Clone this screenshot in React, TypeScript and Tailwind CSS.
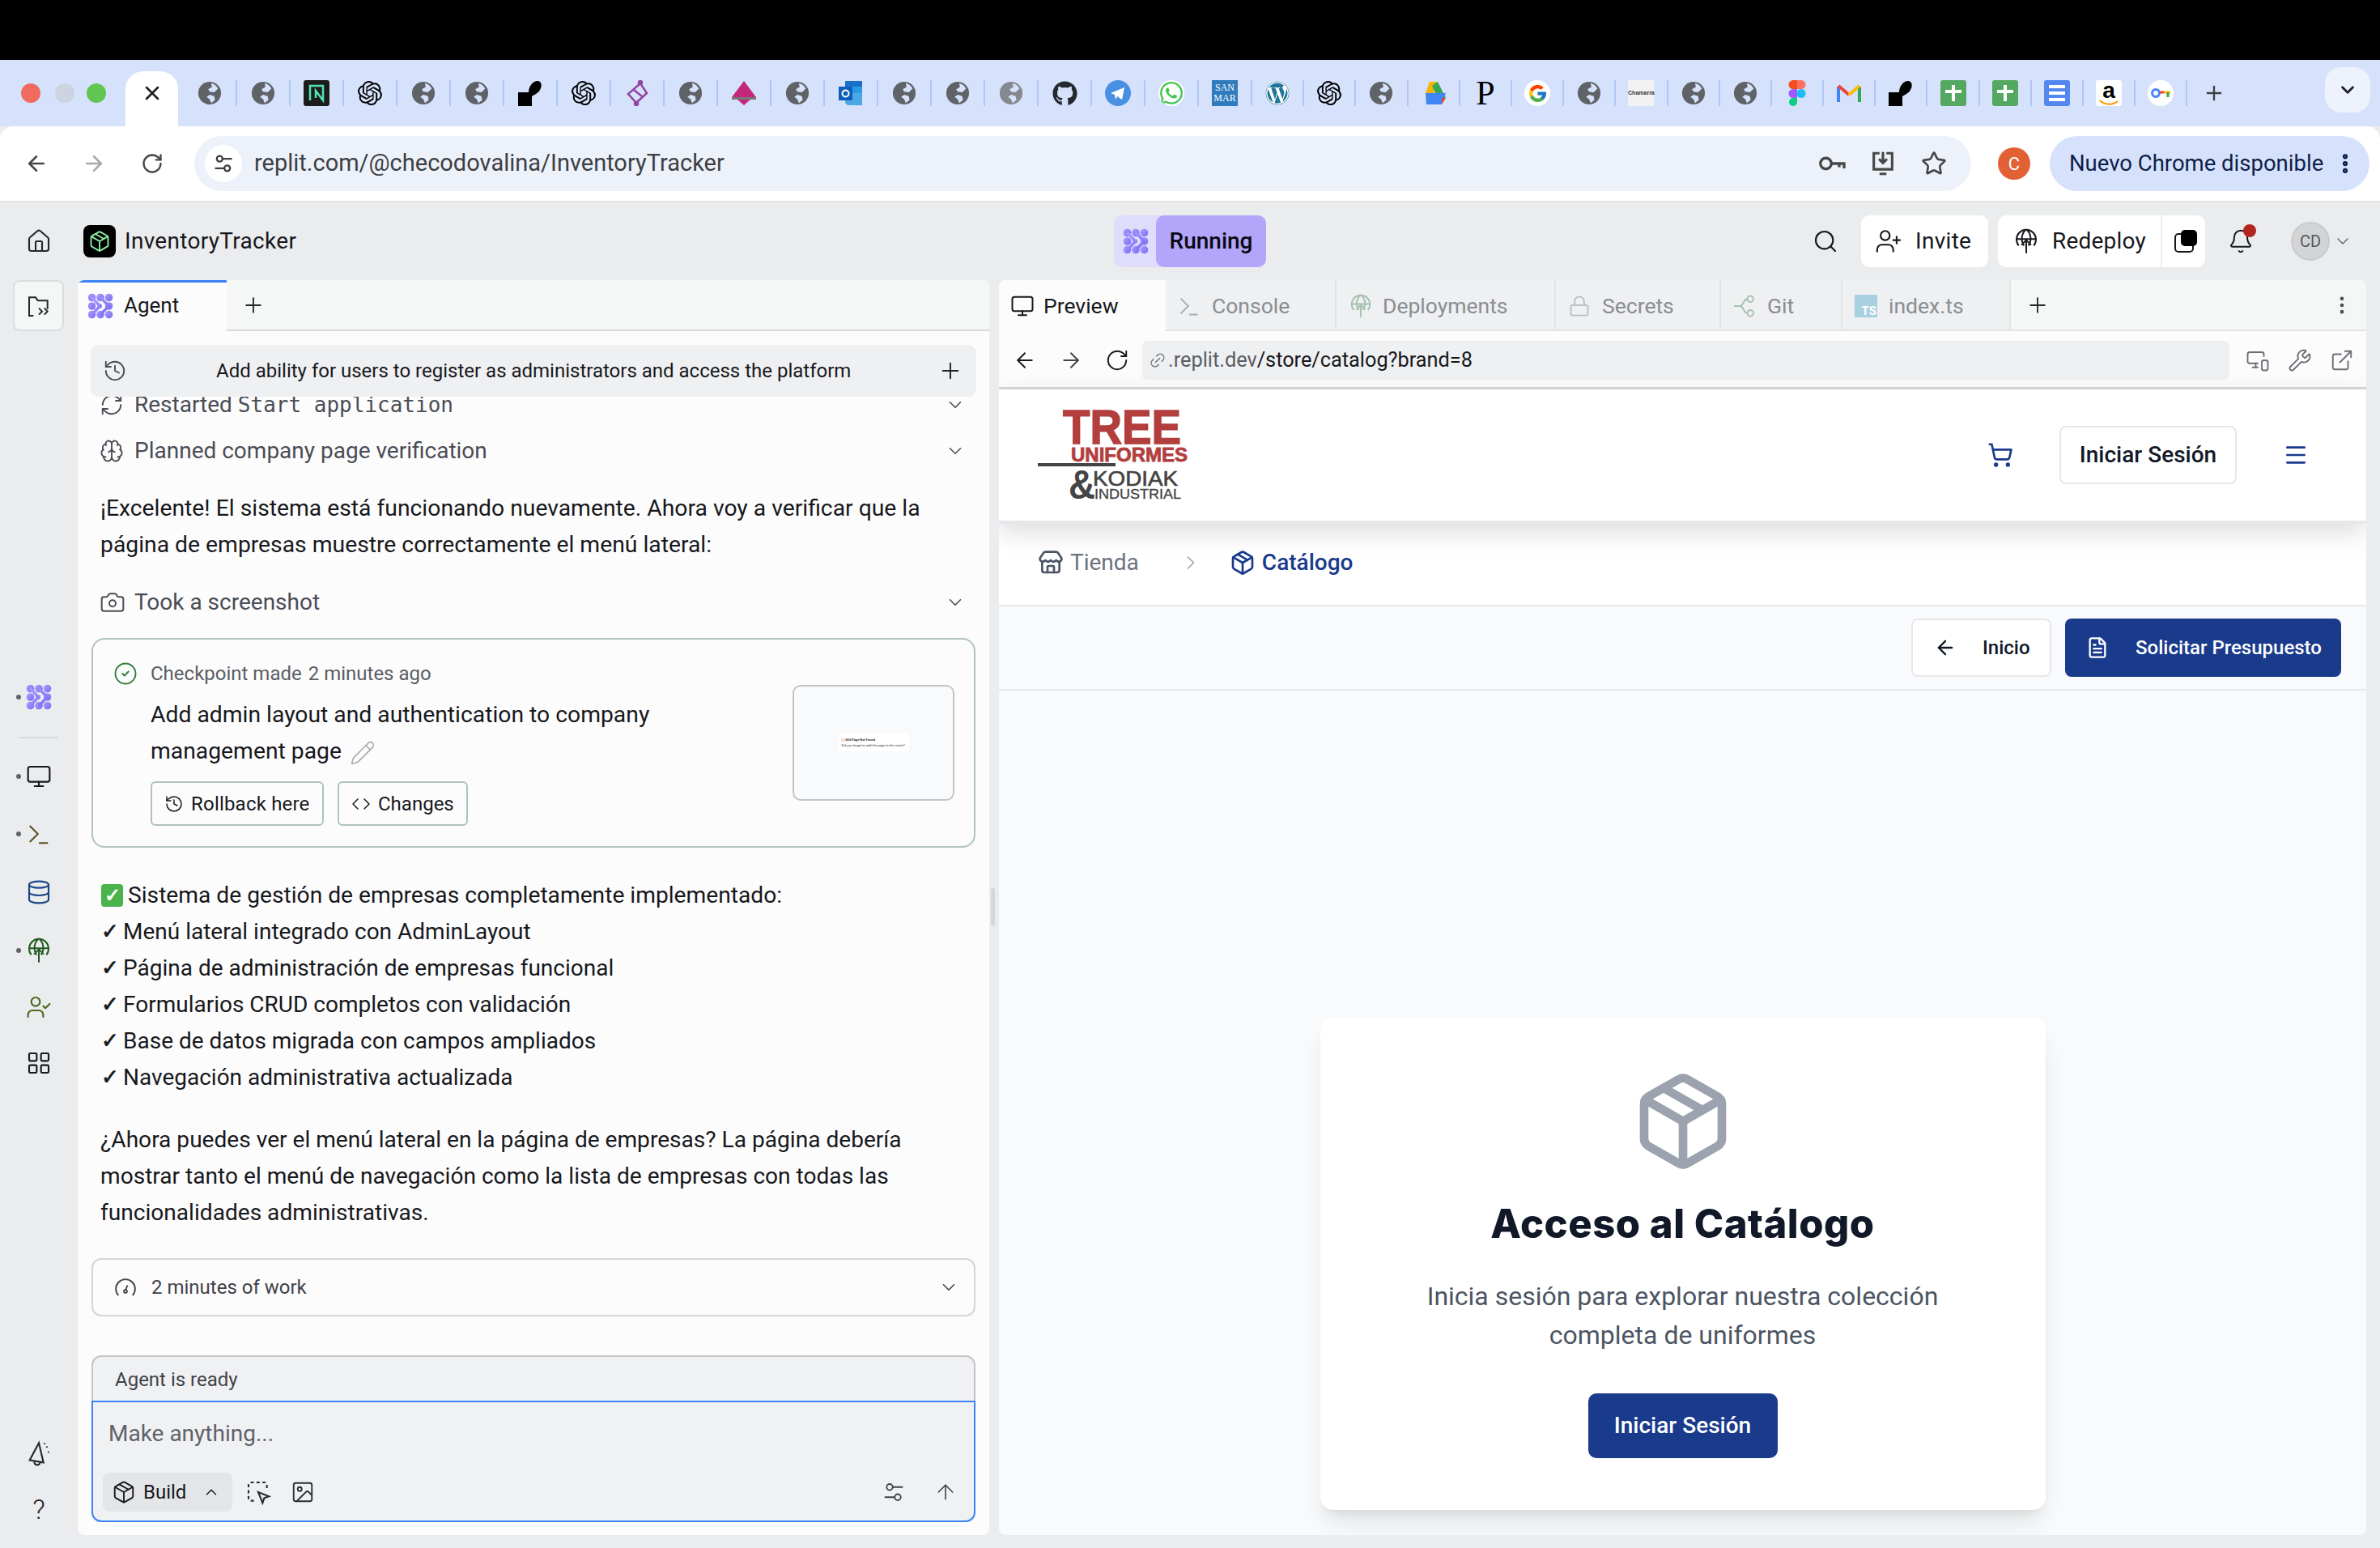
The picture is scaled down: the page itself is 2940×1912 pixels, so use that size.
import {
  ArrowLeft,
  ArrowRight,
  ArrowUp,
  Bell,
  Brain,
  Camera,
  ChevronDown,
  ChevronRight,
  ChevronUp,
  CircleCheck,
  Code,
  Database,
  EllipsisVertical,
  ExternalLink,
  FileText,
  History,
  House,
  Image,
  LayoutGrid,
  Link2,
  Lock,
  Menu,
  Monitor,
  MonitorSmartphone,
  Package,
  Pencil,
  Plus,
  RefreshCw,
  RotateCw,
  Search,
  ShoppingCart,
  Star,
  Store,
  UserCheck,
  UserPlus,
  Wrench,
  X,
} from 'lucide-react'
import { FaGithub, FaWhatsapp, FaWordpress } from 'react-icons/fa'
import { FcGoogle } from 'react-icons/fc'
import { SiOpenai } from 'react-icons/si'

const AgentMark = ({ size = 32 }: { size?: number }) => (
  <svg width={size} height={size} viewBox="0 0 32 32" fill="none">
    <defs>
      <linearGradient id="agent-mark" x1="0" y1="0" x2="1" y2="1">
        <stop offset="0" stopColor="#ad9ffb" />
        <stop offset="1" stopColor="#7a69f8" />
      </linearGradient>
    </defs>
    <g fill="url(#agent-mark)">
      <circle cx="5.500" cy="5.500" r="4.800" />
      <circle cx="16" cy="5.500" r="4.800" />
      <circle cx="26.500" cy="5.500" r="4.800" />
      <circle cx="5.500" cy="16" r="4.800" />
      <circle cx="26.500" cy="16" r="4.800" />
      <circle cx="5.500" cy="26.500" r="4.800" />
      <circle cx="16" cy="26.500" r="4.800" />
      <circle cx="26.500" cy="26.500" r="4.800" />
      <circle cx="15" cy="16" r="3" />
    </g>
    <path d="m5.500 5.500 10 10.500-10 10.500M16 5.500 26.500 16 16 26.500" stroke="url(#agent-mark)" strokeWidth="3.500" />
  </svg>
)

const GlobeUp = ({ size = 32, color = '#1f5a1c' }: { size?: number; color?: string }) => (
  <svg width={size} height={size} viewBox="0 0 24 24" fill="none" stroke={color} strokeWidth="1.500">
    <path d="M5 16a9 9 0 1 1 14 0M3 10h18M12 1c-5 4-5 11-2 15M12 1c5 4 5 11 2 15M12 23V11M7.500 15.500 12 11l4.500 4.500" />
  </svg>
)

const TerminalMark = ({ size = 30, color = '#5c4a1f' }: { size?: number; color?: string }) => (
  <svg width={size} height={size} viewBox="0 0 24 24" fill="none" stroke={color} strokeWidth="1.600">
    <path d="m3 4 8 8-8 8M12 21h9" />
  </svg>
)

const TuneIcon = ({ size = 30, color = '#3f4248', width = 1.5 }: { size?: number; color?: string; width?: number }) => (
  <svg width={size} height={size} viewBox="0 0 24 24" fill="none" stroke={color} strokeWidth={width}>
    <circle cx="8" cy="7" r="3" />
    <path d="M11 7h10M3 17h10" />
    <circle cx="16" cy="17" r="3" />
  </svg>
)

const GlobeFav = ({ light }: { light?: boolean }) => (
  <svg width="30" height="30" viewBox="0 0 16 16">
    <circle cx="8" cy="8" r="7.500" fill={light ? '#85888e' : '#5f6368'} />
    <path
      d="M9 1.500c2 .5 3.500 1.700 4.500 3.500L11 7.500 8 7 7 5.500 9.500 4zM8 9l3 1 .5 2.500-2.500 2-1-2.500-2-1.500z"
      fill="#d6e2fb"
    />
  </svg>
)

const Favicon = ({ name }: { name: string }) => {
  if (name === 'globe') return <GlobeFav />
  if (name === 'globe2') return <GlobeFav light />
  if (name === 'gpt') return <SiOpenai size={30} className="text-black" />
  if (name === 'github') return <FaGithub size={31} className="text-[#24292f]" />
  if (name === 'wa') return <FaWhatsapp size={32} className="rounded-full bg-white text-[#43c553]" />
  if (name === 'wp') return <FaWordpress size={30} className="rounded-full bg-white text-[#21759b]" />
  if (name === 'google')
    return (
      <span className="flex h-8 w-8 items-center justify-center rounded-full bg-white">
        <FcGoogle size={25} />
      </span>
    )
  if (name === 'neon')
    return (
      <span className="flex h-8 w-8 items-center justify-center rounded-[3px] bg-[#1c1c1c]">
        <svg width="22" height="24" viewBox="0 0 22 24" fill="none" stroke="#4fe3b4" strokeWidth="2.500">
          <path d="M3 21V3h16v18l-9-12v9" />
        </svg>
      </span>
    )
  if (name === 'shape')
    return (
      <svg width="32" height="32" viewBox="0 0 32 32">
        <path d="M1 32V15h13c0-7 5-14 11-14 5 0 6 6 3 11-2 4-7 6-10 8v12z" fill="#000" />
      </svg>
    )
  if (name === 'purple')
    return (
      <svg width="32" height="32" viewBox="0 0 32 32" fill="none" stroke="#92459f" strokeWidth="2.500">
        <path d="M20 4 5 17l10 11M20 4l8 12-12 11M12 12l10 8" />
        <circle cx="20" cy="3" r="2" fill="#92459f" />
        <circle cx="15" cy="29" r="2" fill="#92459f" />
      </svg>
    )
  if (name === 'pink')
    return (
      <svg width="32" height="32" viewBox="0 0 32 32">
        <path d="m16 1 15 20H1z" fill="#c4267b" />
        <rect x="1" y="21" width="30" height="3" fill="#777" />
        <path d="M8 24h16l-8 7z" fill="#c4267b" />
      </svg>
    )
  if (name === 'outlook')
    return (
      <svg width="32" height="32" viewBox="0 0 32 32">
        <rect x="9" y="1" width="21" height="15" fill="#1a6fc9" />
        <rect x="17" y="8" width="13" height="10" fill="#2a9be0" />
        <path d="M9 16h21v15H12l-3-3z" fill="#4ba8e6" />
        <rect x="1" y="8" width="17" height="17" fill="#0f5fb8" />
        <circle cx="9.500" cy="16.500" r="4" fill="none" stroke="#fff" strokeWidth="2" />
      </svg>
    )
  if (name === 'telegram')
    return (
      <svg width="32" height="32" viewBox="0 0 32 32">
        <circle cx="16" cy="16" r="16" fill="#4a90e2" />
        <path d="M7 16 24 9l-3 15-6-4-2 4-1-6z" fill="#fff" />
      </svg>
    )
  if (name === 'sanmar')
    return (
      <span className="flex h-8 w-8 flex-col items-center justify-center bg-[#2f7bbd] font-['Liberation_Serif',serif] text-[12px] leading-[13px] text-white">
        <span>SAN</span>
        <span>MAR</span>
      </span>
    )
  if (name === 'drive')
    return (
      <svg width="32" height="32" viewBox="0 0 32 32">
        <path d="M11 2h10l-5 14H6z" fill="#f4b400" />
        <path d="m21 2 10 20H21L14 7z" fill="#34a853" />
        <path d="M6 16h25l-5 14H7z" fill="#4285f4" />
        <path d="M26 22h5l-5 8z" fill="#ea4335" />
      </svg>
    )
  if (name === 'p')
    return <span className="font-['Liberation_Serif',serif] text-[42px] leading-none text-black">P</span>
  if (name === 'chamarra')
    return (
      <span className="flex h-8 w-8 items-center justify-center bg-[#f2f2f2] font-['Liberation_Sans',sans-serif] text-[7px] font-bold text-[#333]">
        Chamarra
      </span>
    )
  if (name === 'figma')
    return (
      <svg width="22" height="32" viewBox="0 0 22 32">
        <path d="M11 0H6a5.500 5.500 0 0 0 0 11h5z" fill="#f24e1e" />
        <path d="M11 0h5a5.500 5.500 0 0 1 0 11h-5z" fill="#ff7262" />
        <path d="M11 11H6a5.500 5.500 0 0 0 0 11h5z" fill="#a259ff" />
        <circle cx="16" cy="16.500" r="5.500" fill="#1abcfe" />
        <path d="M11 22H6a5 5 0 1 0 5 5z" fill="#0acf83" />
      </svg>
    )
  if (name === 'gmail')
    return (
      <svg width="30" height="26" viewBox="0 0 30 26" fill="none">
        <path d="M2 24V5" stroke="#4285f4" strokeWidth="4" />
        <path d="M28 24V5" stroke="#34a853" strokeWidth="4" />
        <path d="m2 4 13 11" stroke="#ea4335" strokeWidth="4" />
        <path d="M15 15 28 4" stroke="#fbbc04" strokeWidth="4" />
      </svg>
    )
  if (name === 'sheets')
    return (
      <span className="flex h-8 w-8 items-center justify-center rounded-[3px] bg-[#55a860]">
        <span className="relative block h-5 w-5">
          <span className="absolute left-0 top-[6px] h-[4px] w-5 bg-white" />
          <span className="absolute left-[8px] top-0 h-5 w-[4px] bg-white" />
        </span>
      </span>
    )
  if (name === 'docs')
    return (
      <span className="flex h-8 w-8 flex-col items-center justify-center gap-[4px] rounded-[3px] bg-[#5088f0]">
        <span className="h-[4px] w-5 bg-white" />
        <span className="h-[4px] w-5 bg-white" />
        <span className="h-[4px] w-5 bg-white" />
      </span>
    )
  if (name === 'amazon')
    return (
      <span className="relative flex h-8 w-8 items-start justify-center rounded-[3px] bg-white font-['Liberation_Sans',sans-serif] text-[28px] font-bold leading-[26px] text-black">
        a
        <svg className="absolute bottom-0 left-1" width="24" height="8" viewBox="0 0 24 8" fill="none" stroke="#f90" strokeWidth="2">
          <path d="M1 1c6 6 16 6 22 1" />
        </svg>
      </span>
    )
  if (name === 'key')
    return (
      <span className="flex h-8 w-8 items-center justify-center rounded-full bg-white">
        <svg width="26" height="14" viewBox="0 0 26 14" fill="none">
          <circle cx="7" cy="7" r="4.500" stroke="#4285f4" strokeWidth="3" />
          <path d="M12 6h5" stroke="#ea4335" strokeWidth="3" />
          <path d="M17 6h8" stroke="#fbbc04" strokeWidth="3" />
          <path d="M22 6v6" stroke="#34a853" strokeWidth="3" />
        </svg>
      </span>
    )
  return null
}

const wideTabs = [
  'globe', 'globe', 'neon', 'gpt', 'globe', 'globe', 'shape', 'gpt', 'purple', 'globe',
  'pink', 'globe', 'outlook', 'globe', 'globe', 'globe2', 'github', 'telegram', 'wa', 'sanmar',
]
const narrowTabs = [
  'wp', 'gpt', 'globe', 'drive', 'p', 'google', 'globe', 'chamarra', 'globe', 'globe',
  'figma', 'gmail', 'shape', 'sheets', 'sheets', 'docs', 'amazon', 'key',
]

const BrowserChrome = () => (
  <>
    <div className="h-[74px] shrink-0 bg-black" />
    <div className="flex h-[82px] shrink-0 items-center bg-[#d6e2fb]">
      <div className="flex w-[155px] shrink-0 items-center pl-[26px]">
        <span className="h-6 w-6 rounded-full bg-[#ef6a5f]" />
        <span className="ml-[18px] h-6 w-6 rounded-full bg-[#ccd4e2]" />
        <span className="ml-[15px] h-6 w-6 rounded-full bg-[#62c554]" />
      </div>
      <div className="mt-[14px] flex h-[68px] w-[65px] shrink-0 items-start justify-center rounded-t-[22px] bg-white pt-[13px]">
        <X size={28} className="text-[#1f1f1f]" strokeWidth={2.2} />
      </div>
      <div className="w-[7px] shrink-0" />
      {wideTabs.map((name, i) => (
        <div key={i} className="relative flex h-[32px] w-[66px] shrink-0 items-center justify-center border-r-2 border-[#afc6f5]">
          <Favicon name={name} />
        </div>
      ))}
      {narrowTabs.map((name, i) => (
        <div key={i} className="relative flex h-[32px] w-[64.200px] shrink-0 items-center justify-center border-r-2 border-[#afc6f5]">
          <Favicon name={name} />
        </div>
      ))}
      <div className="flex w-[66px] shrink-0 justify-center">
        <Plus size={28} className="text-[#3c4043]" />
      </div>
      <div className="ml-auto mr-[12px] mt-[-8px] flex h-[56px] w-[56px] items-center justify-center rounded-[20px] bg-[#edf2fc]">
        <ChevronDown size={26} strokeWidth={2.6} className="text-[#1f1f1f]" />
      </div>
    </div>
    <div className="flex h-[92px] shrink-0 items-center rounded-t-[16px] bg-white">
      <div className="flex w-[240px] shrink-0 items-center pl-[30px]">
        <ArrowLeft size={30} className="text-[#474747]" />
        <ArrowRight size={30} className="ml-[41px] text-[#a9a9a9]" />
        <RotateCw size={28} className="ml-[43px] text-[#474747]" />
      </div>
      <div className="flex h-[68px] w-[2195px] shrink-0 items-center rounded-full bg-[#edf2fa] pl-[13px]">
        <div className="flex h-[46px] w-[46px] shrink-0 items-center justify-center rounded-full bg-white">
          <TuneIcon size={28} color="#3c3f45" width={2} />
        </div>
        <span className="ml-[15px] text-[29px] text-[#3c3f45]">replit.com/@checodovalina/InventoryTracker</span>
        <div className="ml-auto flex items-center pr-[30px] text-[#474747]">
          <svg width="36" height="36" viewBox="0 0 24 24" fill="none" stroke="#474747" strokeWidth="2.200">
            <circle cx="7" cy="12" r="4.500" />
            <path d="M11.500 12H22v4M18 12v3" />
          </svg>
          <svg width="34" height="34" viewBox="0 0 24 24" fill="none" stroke="#474747" strokeWidth="2.200" className="ml-[28px]">
            <path d="M9 3H4v14h16V3h-5M12 2v9M8.500 8l3.500 3.500L15.500 8M9 21h6" />
          </svg>
          <Star size={32} strokeWidth={2} className="ml-[30px]" />
        </div>
      </div>
      <div className="ml-[33px] flex h-10 w-10 shrink-0 items-center justify-center rounded-full bg-[#e16135] text-[22px] text-white">
        C
      </div>
      <div className="ml-[24px] flex h-[68px] w-[395px] shrink-0 items-center rounded-full bg-[#d6e2fb] pl-[24px] text-[#0e1e4a]">
        <span className="text-[27.500px]">Nuevo Chrome disponible</span>
        <EllipsisVertical size={30} strokeWidth={3} className="ml-auto mr-[15px]" />
      </div>
    </div>
    <div className="h-[2px] shrink-0 bg-[#e2e3e5]" />
  </>
)

const TopBar = () => (
  <div className="flex h-[96px] shrink-0 items-center">
    <div className="flex w-[1376px] shrink-0 items-center">
      <House size={32} strokeWidth={1.6} className="ml-[32px] text-[#25272b]" />
      <div className="ml-[39px] flex h-10 w-10 items-center justify-center rounded-[8px] bg-black">
        <Package size={28} strokeWidth={1.6} className="text-[#8ff0a4]" />
      </div>
      <span className="ml-[11px] text-[28px] tracking-[0.3px] text-[#17181c]">InventoryTracker</span>
    </div>
    <div className="flex h-16 w-[188px] shrink-0 rounded-[10px] bg-[#e0dcfb]">
      <div className="flex w-[52px] items-center justify-center pl-[2px]">
        <AgentMark />
      </div>
      <div className="flex flex-1 items-center justify-center rounded-[10px] bg-[#b3a6fa] text-[28px] font-medium text-[#0a0a12]">
        Running
      </div>
    </div>
    <Search size={32} strokeWidth={1.6} className="ml-[675px] shrink-0 text-[#17181c]" />
    <div className="ml-[28px] flex h-16 w-[157px] shrink-0 items-center rounded-[10px] bg-white pl-[17px] text-[28px] tracking-[0.3px] text-[#17181c]">
      <UserPlus size={34} strokeWidth={1.5} />
      <span className="ml-[16px]">Invite</span>
    </div>
    <div className="ml-[12px] flex h-16 w-[256px] shrink-0 items-center rounded-[10px] bg-white text-[28px] tracking-[0.2px] text-[#17181c]">
      <div className="flex h-full w-[203px] items-center border-r-2 border-[#ebecee] pl-[19px]">
        <GlobeUp size={32} color="#17181c" />
        <span className="ml-[16px]">Redeploy</span>
      </div>
      <div className="relative ml-[15px] h-7 w-7">
        <div className="absolute bottom-0 left-0 h-6 w-6 rounded-[5px] border-2 border-[#17181c]" />
        <div className="absolute right-0 top-0 h-5 w-5 rounded-[5px] bg-black" />
      </div>
    </div>
    <div className="relative ml-[28px] shrink-0">
      <Bell size={32} strokeWidth={1.5} className="text-[#17181c]" />
      <span className="absolute right-[-3px] top-[-5px] h-4 w-4 rounded-full bg-[#b3261e]" />
    </div>
    <div className="ml-[46px] flex h-12 w-12 shrink-0 items-center justify-center rounded-full border-2 border-[#c9cacc] bg-[#d3d4d6] text-[20px] text-[#55585e]">
      CD
    </div>
    <ChevronDown size={24} strokeWidth={1.5} className="ml-[4px] shrink-0 text-[#6a6d73]" />
  </div>
)

const RailDot = () => <span className="absolute left-[20px] top-1/2 h-[6px] w-[6px] -translate-y-1/2 rounded-full bg-[#5f6268]" />

const Sidebar = () => (
  <div className="flex w-[96px] shrink-0 flex-col items-center pb-[12px]">
    <div className="mr-[1px] flex h-[63px] w-[63px] items-center justify-center rounded-[8px] border-2 border-[#dcdde0] bg-[#f5f6f6]">
      <svg width="32" height="32" viewBox="0 0 24 24" fill="none" stroke="#25272b" strokeWidth="1.500">
        <path d="M7 21H3V4h6l2 3h9v8M12 14l3 3-3 3M17 14l3 3-3 3" />
      </svg>
    </div>
    <div className="relative mt-[436px] flex h-8 w-full items-center justify-center">
      <RailDot />
      <AgentMark />
    </div>
    <div className="mt-[33px] h-[2px] w-[48px] bg-[#d8d9db]" />
    <div className="relative mt-[31px] flex h-8 w-full items-center justify-center">
      <RailDot />
      <Monitor size={32} strokeWidth={1.6} className="text-[#17181c]" />
    </div>
    <div className="relative mt-[39px] flex h-8 w-full items-center justify-center">
      <RailDot />
      <TerminalMark />
    </div>
    <div className="mt-[40px] flex h-8 items-center">
      <Database size={32} strokeWidth={1.6} className="text-[#1a4585]" />
    </div>
    <div className="relative mt-[40px] flex h-8 w-full items-center justify-center">
      <RailDot />
      <GlobeUp />
    </div>
    <div className="mt-[38px] flex h-8 items-center">
      <UserCheck size={32} strokeWidth={1.6} className="text-[#4a6a1e]" />
    </div>
    <div className="mt-[37px] flex h-8 items-center">
      <LayoutGrid size={32} strokeWidth={1.6} className="text-[#17181c]" />
    </div>
    <svg width="34" height="34" viewBox="0 0 24 24" fill="none" stroke="#25272b" strokeWidth="1.500" className="mt-auto">
      <path d="M12 3 4 18l12 2zM8 19c0 4 5 4 5 1" />
      <path d="M19 6v1M20 11h1M17 3v1" />
    </svg>
    <span className="mt-[32px] text-[34px] font-light leading-[40px] text-[#25272b]">?</span>
  </div>
)

type RowProps = {
  icon: React.ReactNode
  children: React.ReactNode
}
const LogRow = ({ icon, children }: RowProps) => (
  <div className="flex h-[44px] shrink-0 items-center pl-[27px] pr-[29px] text-[28px] text-[#4a4d55]">
    <div className="flex w-[43px] shrink-0 items-center">{icon}</div>
    <div className="flex-1">{children}</div>
    <ChevronDown size={26} strokeWidth={1.5} className="text-[#4a4d55]" />
  </div>
)

const checks = [
  'Menú lateral integrado con AdminLayout',
  'Página de administración de empresas funcional',
  'Formularios CRUD completos con validación',
  'Base de datos migrada con campos ampliados',
  'Navegación administrativa actualizada',
]

const AgentPanel = () => (
  <div className="flex w-[1126px] shrink-0 flex-col overflow-hidden rounded-[8px] bg-[#fcfcfc]">
    <div className="flex h-[63px] shrink-0 bg-[#f5f6f6]">
      <div className="flex w-[184px] items-center border-t-[3px] border-[#3b82f6] bg-[#fcfcfc] pb-[3px] pl-[12px] text-[26px] text-[#17181c]">
        <AgentMark />
        <span className="ml-[13px]">Agent</span>
      </div>
      <div className="flex flex-1 items-center border-b-2 border-[#d8d9db] pl-[18px]">
        <Plus size={30} strokeWidth={1.5} className="text-[#25272b]" />
      </div>
    </div>
    <div className="relative z-10 mx-[16px] mt-[17px] flex h-[64px] shrink-0 items-center rounded-[10px] bg-[#eff0f2] pl-[15px] pr-[16px] text-[24px] text-[#17181c]">
      <History size={30} strokeWidth={1.5} className="text-[#4a4d55]" />
      <span className="ml-[110px]">Add ability for users to register as administrators and access the platform</span>
      <Plus size={32} strokeWidth={1.5} className="ml-auto text-[#25272b]" />
    </div>
    <div className="mt-[-12px]">
      <LogRow icon={<RefreshCw size={30} strokeWidth={1.5} />}>
        Restarted <span className="font-['DejaVu_Sans_Mono',monospace] text-[26px]">Start application</span>
      </LogRow>
    </div>
    <div className="mt-[13px]">
      <LogRow icon={<Brain size={30} strokeWidth={1.5} />}>Planned company page verification</LogRow>
    </div>
    <p className="mt-[26px] px-[28px] text-[28.300px] leading-[45px] text-[#17181c]">
      ¡Excelente! El sistema está funcionando nuevamente. Ahora voy a verificar que la página de empresas muestre correctamente el menú lateral:
    </p>
    <div className="mt-[27px]">
      <LogRow icon={<Camera size={32} strokeWidth={1.5} />}>Took a screenshot</LogRow>
    </div>
    <div className="mx-[17px] mt-[22px] flex h-[259px] shrink-0 rounded-[16px] border-2 border-[#b0c4b8] pl-[25px]">
      <div className="flex-1">
        <div className="mt-[24px] flex items-center">
          <CircleCheck size={30} strokeWidth={1.5} className="text-[#2e7d3c]" />
          <span className="ml-[16px] text-[24px] text-[#5a5d65]">Checkpoint made</span>
          <span className="ml-[8px] text-[24px] text-[#5a5d65]">2 minutes ago</span>
        </div>
        <p className="ml-[46px] mt-[10px] w-[700px] text-[28.300px] leading-[45px] text-[#17181c]">
          Add admin layout and authentication to company management page
          <Pencil size={32} strokeWidth={1.2} className="ml-[10px] inline text-[#a8aaae]" />
        </p>
        <div className="ml-[46px] mt-[15px] flex">
          <div className="flex h-[55px] w-[214px] items-center rounded-[6px] border-2 border-[#b0c4b8] pl-[15px] text-[24px] tracking-[0.2px] text-[#17181c]">
            <History size={24} strokeWidth={1.5} />
            <span className="ml-[9px]">Rollback here</span>
          </div>
          <div className="ml-[17px] flex h-[55px] w-[161px] items-center rounded-[6px] border-2 border-[#b0c4b8] pl-[15px] text-[24px] text-[#17181c]">
            <Code size={24} strokeWidth={1.5} />
            <span className="ml-[9px]">Changes</span>
          </div>
        </div>
      </div>
      <div className="mr-[24px] mt-[56px] flex h-[143px] w-[200px] items-start justify-center rounded-[10px] border-2 border-[#c2c4c6] bg-[#f9fafb] pt-[58px]">
        <div className="flex h-[22px] w-[87px] flex-col justify-center bg-white pl-[4px] text-[4px] leading-[7px] text-[#333]">
          <span className="font-bold"><span className="text-[#c0392b]">( )</span> 404 Page Not Found</span>
          <span>Did you forget to add the page to the router?</span>
        </div>
      </div>
    </div>
    <div className="mt-[36px] px-[29px] text-[28px] leading-[45px] text-[#17181c]">
      <div className="flex items-center">
        <span className="flex h-[28px] w-[27px] items-center justify-center rounded-[4px] bg-[#4bb34b] text-[24px] font-bold leading-none text-white">✓</span>
        <span className="ml-[6px] text-[28.200px]">Sistema de gestión de empresas completamente implementado:</span>
      </div>
      {checks.map((c) => (
        <div key={c} className="flex">
          <span className="w-[27px] font-['DejaVu_Sans',sans-serif] text-[26px] [-webkit-text-stroke:0.8px_#17181c]">✓</span>
          <span>{c}</span>
        </div>
      ))}
    </div>
    <p className="mt-[32px] px-[28px] text-[28.100px] leading-[45px] text-[#17181c]">
      ¿Ahora puedes ver el menú lateral en la página de empresas? La página debería mostrar tanto el menú de navegación como la lista de empresas con todas las funcionalidades administrativas.
    </p>
    <div className="mx-[17px] mt-[34px] flex h-[72px] shrink-0 items-center rounded-[12px] border-2 border-[#d4d5d7] pl-[25px] pr-[18px] text-[24px] text-[#3f4248]">
      <svg width="30" height="30" viewBox="0 0 24 24" fill="none" stroke="#3f4248" strokeWidth="1.500">
        <path d="M5 20a9.500 9.500 0 1 1 14 0M12 15l2-5" />
        <circle cx="12" cy="16" r="1.500" />
      </svg>
      <span className="ml-[17px]">2 minutes of work</span>
      <ChevronDown size={26} strokeWidth={1.5} className="ml-auto" />
    </div>
    <div className="mx-[17px] mt-[48px] flex h-[56px] shrink-0 items-center rounded-t-[12px] border-2 border-b-0 border-[#c4c5c7] bg-[#f0f1f3] pl-[27px] pt-[2px] text-[24px] text-[#3f4248]">
      Agent is ready
    </div>
    <div className="mx-[17px] h-[150px] shrink-0 rounded-b-[12px] border-2 border-[#3b82f6] bg-[#f0f1f3] px-[12px]">
      <div className="mt-[18px] pl-[7px] text-[28px] text-[#5f6269]">Make anything...</div>
      <div className="mt-[27px] flex items-center">
        <div className="flex h-[48px] w-[160px] items-center rounded-[8px] bg-[#e4e5e7] pl-[11px] text-[24px] text-[#17181c]">
          <Package size={30} strokeWidth={1.5} />
          <span className="ml-[9px]">Build</span>
          <ChevronUp size={22} strokeWidth={1.5} className="ml-[20px]" />
        </div>
        <svg width="32" height="32" viewBox="0 0 24 24" fill="none" stroke="#2a2c31" strokeWidth="1.600" className="ml-[16px]">
          <path d="M8 20H5a2 2 0 0 1-2-2V5a2 2 0 0 1 2-2h13a2 2 0 0 1 2 2v5" strokeDasharray="3 2.500" />
          <path d="m12 12 10 4-4.500 1.500L16 22z" />
        </svg>
        <Image size={30} strokeWidth={1.5} className="ml-[24px] text-[#2a2c31]" />
        <span className="ml-auto">
          <TuneIcon />
        </span>
        <ArrowUp size={30} strokeWidth={1.3} className="ml-[34px] mr-[8px] text-[#3f4248]" />
      </div>
    </div>
  </div>
)

const PanelTab = ({ icon, label, width }: { icon: React.ReactNode; label: string; width: string }) => (
  <div className={`flex shrink-0 items-center border-b-2 border-r-2 border-[#e3e4e6] bg-[#eff0f2] pl-[15px] pt-[3px] text-[26.500px] text-[#8a8d93] ${width}`}>
    <span className="flex w-[42px] items-center">{icon}</span>
    {label}
  </div>
)

const TreeLogo = () => (
  <svg width="190" height="140" viewBox="0 -12 190 140">
    <g fontFamily="Liberation Sans, sans-serif">
      <text x="31" y="44" fontSize="60" fontWeight="700" fill="#b23f3d" stroke="#b23f3d" strokeWidth="1.500" textLength="146" lengthAdjust="spacingAndGlyphs">TREE</text>
      <text x="41" y="66" fontSize="24" fontWeight="700" fill="#b23f3d" stroke="#b23f3d" strokeWidth=".8" textLength="144" lengthAdjust="spacingAndGlyphs">UNIFORMES</text>
      <rect x="0" y="68" width="96" height="4" fill="#444" />
      <text x="38" y="112" fontSize="50" fontWeight="700" fill="#444" textLength="33" lengthAdjust="spacingAndGlyphs">&amp;</text>
      <text x="68" y="96" fontSize="25" fill="#444" stroke="#444" strokeWidth=".6" textLength="105" lengthAdjust="spacingAndGlyphs">KODIAK</text>
      <text x="70" y="112" fontSize="17" fill="#444" stroke="#444" strokeWidth=".3" textLength="107" lengthAdjust="spacingAndGlyphs">INDUSTRIAL</text>
    </g>
  </svg>
)

const PreviewPanel = () => (
  <div className="flex w-[1689px] shrink-0 flex-col overflow-hidden rounded-[8px] bg-[#f9fafb]">
    <div className="flex h-[63px] shrink-0 bg-[#f5f6f6]">
      <div className="flex w-[206px] shrink-0 items-center bg-[#fcfcfc] pl-[14px] text-[26.500px] text-[#17181c]">
        <Monitor size={30} strokeWidth={1.6} />
        <span className="ml-[11px]">Preview</span>
      </div>
      <PanelTab width="w-[211px]" label="Console" icon={<TerminalMark size={28} color="#a8aaae" />} />
      <PanelTab width="w-[271px]" label="Deployments" icon={<GlobeUp size={30} color="#a5c0ae" />} />
      <PanelTab width="w-[204px]" label="Secrets" icon={<Lock size={28} strokeWidth={1.5} className="text-[#b9bbbe]" />} />
      <PanelTab
        width="w-[150px]"
        label="Git"
        icon={
          <svg width="30" height="30" viewBox="0 0 24 24" fill="none" stroke="#a5c0ae" strokeWidth="1.500">
            <path d="M1 12h6c3 0 3-7 7-7M7 12c3 0 3 7 7 7" />
            <circle cx="17" cy="5" r="3" />
            <circle cx="17" cy="19" r="3" />
          </svg>
        }
      />
      <PanelTab
        width="w-[208px]"
        label="index.ts"
        icon={
          <span className="flex h-7 w-7 items-end justify-end bg-[#a9d0e0] pr-[1px] text-[15px] font-bold leading-none text-white">TS</span>
        }
      />
      <div className="flex flex-1 items-center justify-between border-b-2 border-[#e3e4e6] pl-[18px] pr-[16px]">
        <Plus size={30} strokeWidth={1.5} className="text-[#25272b]" />
        <EllipsisVertical size={28} strokeWidth={2} className="text-[#4a4d55]" />
      </div>
    </div>
    <div className="flex h-[72px] shrink-0 items-center border-b-[3px] border-[#d8d9db] bg-[#fcfcfc] pt-[3px]">
      <ArrowLeft size={30} strokeWidth={1.5} className="ml-[17px] text-[#17181c]" />
      <ArrowRight size={30} strokeWidth={1.5} className="ml-[27px] text-[#3f4248]" />
      <RotateCw size={30} strokeWidth={1.5} className="ml-[27px] text-[#17181c]" />
      <div className="ml-[16px] flex h-[48px] w-[1343px] items-center rounded-[6px] bg-[#eff0f2] pl-[8px] text-[25.300px] text-[#17181c]">
        <Link2 size={22} strokeWidth={1.5} className="-rotate-45 text-[#6a6d73]" />
        <span className="ml-[2px] text-[#5a5d65]">.replit.dev</span>
        <span>/store/catalog?brand=8</span>
      </div>
      <MonitorSmartphone size={30} strokeWidth={1.5} className="ml-[20px] text-[#6a6d73]" />
      <Wrench size={30} strokeWidth={1.5} className="ml-[22px] text-[#6a6d73]" />
      <ExternalLink size={30} strokeWidth={1.5} className="ml-[22px] text-[#6a6d73]" />
    </div>
    <div className="relative z-10 flex h-[166px] shrink-0 items-center border-b-4 border-[#e5e7eb] bg-white pl-[48px] shadow-[0_10px_30px_rgba(0,0,0,0.14)]">
      <TreeLogo />
      <ShoppingCart size={32} strokeWidth={2} className="ml-[983px] text-[#1a3a8c]" />
      <div className="ml-[57px] flex h-[72px] w-[219px] items-center justify-center rounded-[8px] border-2 border-[#e5e7eb] bg-white text-[28px] font-medium text-[#111827]">
        Iniciar Sesión
      </div>
      <Menu size={32} strokeWidth={2} className="ml-[57px] text-[#1a3a8c]" />
    </div>
    <div className="flex h-[102px] shrink-0 items-center border-b-2 border-[#e5e7eb] bg-white pb-[4px] pl-[48px] text-[28px]">
      <Store size={32} strokeWidth={2} className="text-[#4b5563]" />
      <span className="ml-[8px] text-[#6b7280]">Tienda</span>
      <ChevronRight size={28} strokeWidth={1.5} className="ml-[50px] text-[#9ca3af]" />
      <Package size={32} strokeWidth={2} className="ml-[34px] text-[#1a3a8c]" />
      <span className="ml-[8px] font-medium text-[#1a3a8c]">Catálogo</span>
    </div>
    <div className="flex h-[104px] shrink-0 items-center justify-end border-b-2 border-[#e5e7eb] pr-[31px]">
      <div className="flex h-[72px] w-[173px] items-center rounded-[8px] border-2 border-[#e5e7eb] bg-white pl-[26px] text-[24px] font-medium text-[#111827]">
        <ArrowLeft size={28} strokeWidth={2} />
        <span className="ml-[32px]">Inicio</span>
      </div>
      <div className="ml-[17px] flex h-[72px] w-[341px] items-center rounded-[8px] bg-[#1a3a8c] pl-[26px] text-[24px] font-medium text-white">
        <FileText size={28} strokeWidth={2} />
        <span className="ml-[33px]">Solicitar Presupuesto</span>
      </div>
    </div>
    <div className="flex flex-1 justify-center pt-[404px]">
      <div className="flex h-[608px] w-[896px] flex-col items-center rounded-[16px] bg-white pt-[64px] shadow-[0_20px_30px_-6px_rgba(0,0,0,0.1),0_8px_12px_-6px_rgba(0,0,0,0.08)]">
        <Package size={128} strokeWidth={2} className="text-[#9ca3af]" />
        <h2 className="mt-[31px] font-[Inter,sans-serif] text-[49px] font-extrabold leading-[64px] tracking-[0.5px] text-[#111827]">Acceso al Catálogo</h2>
        <p className="mt-[33px] w-[700px] text-center text-[32px] leading-[48px] text-[#4b5563]">
          Inicia sesión para explorar nuestra colección completa de uniformes
        </p>
        <div className="mt-[48px] flex h-[80px] w-[234px] items-center justify-center rounded-[10px] bg-[#1a3a8c] text-[28px] font-medium text-white">
          Iniciar Sesión
        </div>
      </div>
    </div>
  </div>
)

const App = () => (
  <div className="flex h-[1912px] w-[2940px] flex-col overflow-hidden bg-[#ebecee] font-[Roboto,sans-serif]">
    <BrowserChrome />
    <TopBar />
    <div className="flex h-[1550px] shrink-0">
      <Sidebar />
      <AgentPanel />
      <div className="relative w-[12px] shrink-0">
        <span className="absolute left-[2px] top-[751px] h-[47px] w-[5px] rounded-full bg-[#d5d6d8]" />
      </div>
      <PreviewPanel />
    </div>
  </div>
)

export default App
